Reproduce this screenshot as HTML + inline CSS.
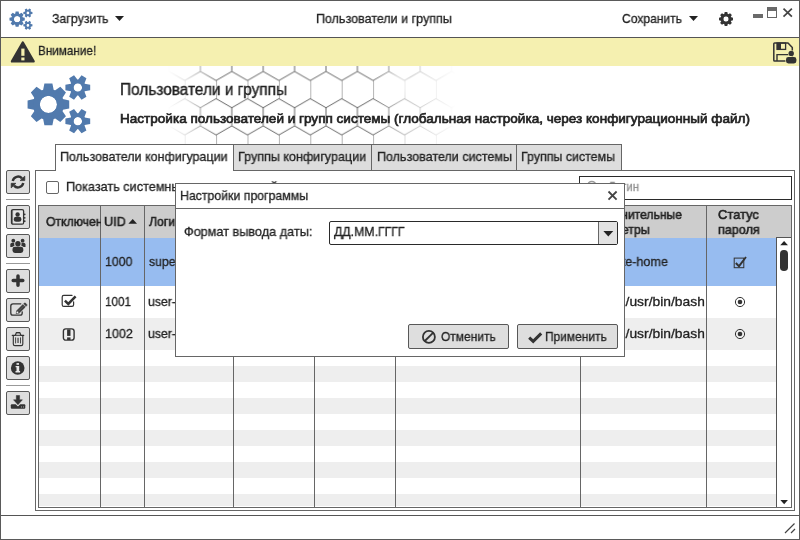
<!DOCTYPE html>
<html>
<head>
<meta charset="utf-8">
<style>
html,body{margin:0;padding:0;}
body{width:800px;height:540px;overflow:hidden;background:#fff;font-family:"Liberation Sans",sans-serif;font-size:13px;color:#222;position:relative;}
.abs{position:absolute;}
.t{position:absolute;white-space:nowrap;line-height:20px;color:#222;font-size:13px;transform-origin:0 0;will-change:transform;}
svg{position:absolute;overflow:visible;}
#win{position:absolute;left:0;top:0;width:798px;height:538px;border:1px solid #5a5a5a;background:#fff;}
#titleline{left:1px;top:37px;width:798px;height:1px;background:#555;}
#alert{left:1px;top:38px;width:798px;height:28px;background:#f5f0b0;}
#status{left:1px;top:515px;width:798px;height:1px;background:#555;}
.tab{position:absolute;top:144px;height:27px;border:1px solid #666;background:#ddd;box-sizing:border-box;}
.tab.sel{background:#fff;border-bottom:none;height:27px;z-index:3;}
#panel{left:35px;top:170px;width:760px;height:341px;border:1px solid #666;box-sizing:border-box;background:#fff;}
.tb{position:absolute;left:6px;width:24px;height:24px;box-sizing:border-box;border:1px solid #585858;background:#dedede;border-radius:2px;}
.sep{position:absolute;left:6px;width:24px;height:1px;background:#999;}
#table{left:38px;top:205px;width:754px;height:303px;border:1px solid #666;box-sizing:border-box;background:#fff;}
.col{position:absolute;top:206px;width:1px;height:301px;background:#666;}
.stripe{position:absolute;left:39px;width:737px;background:#eee;}
#dialog{left:175px;top:183px;width:450px;height:174px;border:1px solid #666;box-sizing:border-box;background:#fff;z-index:10;}
.btn{position:absolute;height:25px;box-sizing:border-box;border:1px solid #585858;background:#dedede;border-radius:2px;}
.z11{z-index:11;}
</style>
</head>
<body>
<div id="win"></div>
<div id="titleline" class="abs"></div>
<div id="alert" class="abs"></div>

<!-- title bar -->
<svg style="left:9px;top:8px;" width="24" height="22" viewBox="0 0 64 60"><path d="M35.86 25.10 L42.22 26.40 L42.22 34.40 L35.86 35.70 L35.37 36.88 L38.95 42.29 L33.29 47.95 L27.88 44.37 L26.70 44.86 L25.40 51.22 L17.40 51.22 L16.10 44.86 L14.92 44.37 L9.51 47.95 L3.85 42.29 L7.43 36.88 L6.94 35.70 L0.58 34.40 L0.58 26.40 L6.94 25.10 L7.43 23.92 L3.85 18.51 L9.51 12.85 L14.92 16.43 L16.10 15.94 L17.40 9.58 L25.40 9.58 L26.70 15.94 L27.88 16.43 L33.29 12.85 L38.95 18.51 L35.37 23.92Z M12.80 30.40 a8.60 8.60 0 1 0 17.20 0 a8.60 8.60 0 1 0 -17.20 0Z" fill="#517aad" fill-rule="evenodd"/><path d="M57.67 9.80 L63.19 10.70 L63.19 16.30 L57.67 17.20 L57.44 17.60 L59.42 22.83 L54.57 25.63 L51.03 21.30 L50.57 21.30 L47.03 25.63 L42.18 22.83 L44.16 17.60 L43.93 17.20 L38.41 16.30 L38.41 10.70 L43.93 9.80 L44.16 9.40 L42.18 4.17 L47.03 1.37 L50.57 5.70 L51.03 5.70 L54.57 1.37 L59.42 4.17 L57.44 9.40Z M46.50 13.50 a4.30 4.30 0 1 0 8.60 0 a4.30 4.30 0 1 0 -8.60 0Z" fill="#517aad" fill-rule="evenodd"/><path d="M57.67 43.50 L63.19 44.40 L63.19 50.00 L57.67 50.90 L57.44 51.30 L59.42 56.53 L54.57 59.33 L51.03 55.00 L50.57 55.00 L47.03 59.33 L42.18 56.53 L44.16 51.30 L43.93 50.90 L38.41 50.00 L38.41 44.40 L43.93 43.50 L44.16 43.10 L42.18 37.87 L47.03 35.07 L50.57 39.40 L51.03 39.40 L54.57 35.07 L59.42 37.87 L57.44 43.10Z M46.50 47.20 a4.30 4.30 0 1 0 8.60 0 a4.30 4.30 0 1 0 -8.60 0Z" fill="#517aad" fill-rule="evenodd"/><circle cx="21.4" cy="30.4" r="12" fill="none" stroke="#517aad" stroke-width="6.8"/><circle cx="50.8" cy="13.5" r="6.05" fill="none" stroke="#517aad" stroke-width="3.5"/><circle cx="50.8" cy="47.2" r="6.05" fill="none" stroke="#517aad" stroke-width="3.5"/></svg>
<div class="t" style="left:51.75px;top:8.70px;font-size:13px;transform:scaleX(0.9524);-webkit-text-stroke:0.3px #222;">Загрузить</div>
<svg style="left:115px;top:16px;" width="9" height="5" viewBox="0 0 9 5"><path d="M0 0H9L4.5 5Z" fill="#222"/></svg>
<div class="t" style="left:315.79px;top:8.80px;font-size:13px;transform:scaleX(0.9625);-webkit-text-stroke:0.3px #222;">Пользователи и группы</div>
<div class="t" style="left:621.75px;top:8.70px;font-size:13px;transform:scaleX(0.9294);-webkit-text-stroke:0.3px #222;">Сохранить</div>
<svg style="left:689px;top:16px;" width="9" height="5" viewBox="0 0 9 5"><path d="M0 0H9L4.5 5Z" fill="#222"/></svg>

<svg style="left:719px;top:12px;" width="14" height="14" viewBox="0 0 14 14"><path d="M11.62 5.10 L13.98 5.70 L13.98 8.30 L11.62 8.90 L11.61 8.93 L12.85 11.02 L11.02 12.85 L8.93 11.61 L8.90 11.62 L8.30 13.98 L5.70 13.98 L5.10 11.62 L5.07 11.61 L2.98 12.85 L1.15 11.02 L2.39 8.93 L2.38 8.90 L0.02 8.30 L0.02 5.70 L2.38 5.10 L2.39 5.07 L1.15 2.98 L2.98 1.15 L5.07 2.39 L5.10 2.38 L5.70 0.02 L8.30 0.02 L8.90 2.38 L8.93 2.39 L11.02 1.15 L12.85 2.98 L11.61 5.07Z M4.30 7.00 a2.70 2.70 0 1 0 5.40 0 a2.70 2.70 0 1 0 -5.40 0Z" fill="#333" fill-rule="evenodd"/><circle cx="7" cy="7" r="3.95" fill="none" stroke="#333" stroke-width="2.5"/></svg><div class="abs" style="left:753px;top:14px;width:10px;height:4px;background:#6a6a6a;"></div><div class="abs" style="left:767px;top:7px;width:10px;height:11px;box-sizing:border-box;border:1px solid #666;border-top:4px solid #6a6a6a;background:#fff;"></div><svg style="left:783px;top:8px;" width="10" height="10" viewBox="0 0 10 10"><path d="M0.5 0.7L8.9 8.7M8.9 0.7L0.5 8.7" stroke="#444" stroke-width="1.7" fill="none"/></svg>

<!-- alert -->
<div class="t" style="left:38.40px;top:41.10px;font-size:13px;transform:scaleX(0.9007);-webkit-text-stroke:0.3px #222;">Внимание!</div>

<svg style="left:10px;top:40.5px;" width="26" height="23" viewBox="0 0 26 23"><path d="M12.8 1.6L23.6 20.4H2Z" fill="#333" stroke="#333" stroke-width="2.4" stroke-linejoin="round"/><rect x="11.3" y="7.6" width="3.2" height="7.2" fill="#f5f0b0"/><rect x="11.3" y="16.5" width="3.2" height="2.9" fill="#f5f0b0"/></svg>
<svg style="left:770px;top:40px;" width="28" height="25" viewBox="0 0 28 25"><path d="M4.6 3H18L22.3 7.6V19.4Q22.3 21 20.7 21H4.6Q3.8 21 3.8 20.2V3.8Q3.8 3 4.6 3Z" fill="none" stroke="#333" stroke-width="1.5" stroke-linejoin="round"/><rect x="7" y="3" width="8.6" height="6.4" fill="none" stroke="#333" stroke-width="1.3"/><rect x="7" y="3" width="4" height="6.4" fill="#333"/><path d="M7 21V14.6H20" fill="none" stroke="#333" stroke-width="1.4"/><circle cx="21.2" cy="13.4" r="3.2" fill="#f5f0b0"/><rect x="15.4" y="16.5" width="11.6" height="7.6" rx="3" fill="#f5f0b0"/><circle cx="21.2" cy="13.4" r="2.7" fill="#333"/><rect x="16" y="17.1" width="10.4" height="6.4" rx="2.4" fill="#333"/></svg>

<!-- heading -->
<svg style="left:165px;top:66px;" width="300" height="78" viewBox="165 66 300 78">
<defs>
<pattern id="hx" patternUnits="userSpaceOnUse" x="216.1" y="71.45" width="31.4" height="54.45"><path d="M0 9.07L15.70 0L31.40 9.07M0 9.07V27.22M0 27.22L15.70 36.30L31.40 27.22M15.70 36.30V54.45" fill="none" stroke="#000" stroke-width="0.6"/></pattern>
<linearGradient id="hg" x1="165" x2="465" y1="0" y2="0" gradientUnits="userSpaceOnUse"><stop offset="0.010" stop-color="#fff" stop-opacity="0"/><stop offset="0.070" stop-color="#fff" stop-opacity="0.25"/><stop offset="0.117" stop-color="#fff" stop-opacity="0.6"/><stop offset="0.170" stop-color="#fff" stop-opacity="1"/><stop offset="0.690" stop-color="#fff" stop-opacity="1"/><stop offset="0.777" stop-color="#fff" stop-opacity="0.55"/><stop offset="0.877" stop-color="#fff" stop-opacity="0.25"/><stop offset="0.970" stop-color="#fff" stop-opacity="0"/></linearGradient>
<radialGradient id="hb"><stop offset="0" stop-color="#fff" stop-opacity="0.9"/><stop offset="1" stop-color="#fff" stop-opacity="0"/></radialGradient>
<mask id="hm" maskUnits="userSpaceOnUse" x="165" y="66" width="300" height="78"><rect x="165" y="66" width="300" height="78" fill="url(#hg)"/></mask>
</defs>
<rect x="165" y="66" width="300" height="78" fill="url(#hx)" mask="url(#hm)"/>
<ellipse cx="396" cy="86" rx="20" ry="16" fill="url(#hb)"/>
</svg>
<svg style="left:27px;top:74px;" width="64" height="60" viewBox="0 0 64 60"><path d="M35.86 25.10 L42.22 26.40 L42.22 34.40 L35.86 35.70 L35.37 36.88 L38.95 42.29 L33.29 47.95 L27.88 44.37 L26.70 44.86 L25.40 51.22 L17.40 51.22 L16.10 44.86 L14.92 44.37 L9.51 47.95 L3.85 42.29 L7.43 36.88 L6.94 35.70 L0.58 34.40 L0.58 26.40 L6.94 25.10 L7.43 23.92 L3.85 18.51 L9.51 12.85 L14.92 16.43 L16.10 15.94 L17.40 9.58 L25.40 9.58 L26.70 15.94 L27.88 16.43 L33.29 12.85 L38.95 18.51 L35.37 23.92Z M12.80 30.40 a8.60 8.60 0 1 0 17.20 0 a8.60 8.60 0 1 0 -17.20 0Z" fill="#517aad" fill-rule="evenodd"/><path d="M57.67 9.80 L63.19 10.70 L63.19 16.30 L57.67 17.20 L57.44 17.60 L59.42 22.83 L54.57 25.63 L51.03 21.30 L50.57 21.30 L47.03 25.63 L42.18 22.83 L44.16 17.60 L43.93 17.20 L38.41 16.30 L38.41 10.70 L43.93 9.80 L44.16 9.40 L42.18 4.17 L47.03 1.37 L50.57 5.70 L51.03 5.70 L54.57 1.37 L59.42 4.17 L57.44 9.40Z M46.50 13.50 a4.30 4.30 0 1 0 8.60 0 a4.30 4.30 0 1 0 -8.60 0Z" fill="#517aad" fill-rule="evenodd"/><path d="M57.67 43.50 L63.19 44.40 L63.19 50.00 L57.67 50.90 L57.44 51.30 L59.42 56.53 L54.57 59.33 L51.03 55.00 L50.57 55.00 L47.03 59.33 L42.18 56.53 L44.16 51.30 L43.93 50.90 L38.41 50.00 L38.41 44.40 L43.93 43.50 L44.16 43.10 L42.18 37.87 L47.03 35.07 L50.57 39.40 L51.03 39.40 L54.57 35.07 L59.42 37.87 L57.44 43.10Z M46.50 47.20 a4.30 4.30 0 1 0 8.60 0 a4.30 4.30 0 1 0 -8.60 0Z" fill="#517aad" fill-rule="evenodd"/><circle cx="21.4" cy="30.4" r="12" fill="none" stroke="#517aad" stroke-width="6.8"/><circle cx="50.8" cy="13.5" r="6.05" fill="none" stroke="#517aad" stroke-width="3.5"/><circle cx="50.8" cy="47.2" r="6.05" fill="none" stroke="#517aad" stroke-width="3.5"/></svg>
<div class="t" style="left:120.44px;top:80.46px;font-size:16px;transform:scaleX(0.9620);-webkit-text-stroke:0.4px #222;">Пользователи и группы</div>
<div class="t" style="left:120.36px;top:108.50px;font-size:13px;transform:scaleX(1.0417);-webkit-text-stroke:0.65px #222;">Настройка пользователей и групп системы (глобальная настройка, через конфигурационный файл)</div>

<!-- tabs -->
<div class="tab sel" style="left:55px;width:179px;"></div>
<div class="tab" style="left:233px;width:139px;"></div>
<div class="tab" style="left:371px;width:146px;"></div>
<div class="tab" style="left:516px;width:106px;"></div>
<div id="panel" class="abs"></div>
<div class="t" style="left:60.29px;top:146.90px;font-size:13px;transform:scaleX(0.9614);z-index:4;-webkit-text-stroke:0.3px #222;">Пользователи конфигурации</div>
<div class="t" style="left:237.93px;top:146.90px;font-size:13px;transform:scaleX(0.9658);-webkit-text-stroke:0.3px #222;">Группы конфигурации</div>
<div class="t" style="left:376.54px;top:146.90px;font-size:13px;transform:scaleX(0.9640);-webkit-text-stroke:0.3px #222;">Пользователи системы</div>
<div class="t" style="left:520.95px;top:146.90px;font-size:13px;transform:scaleX(0.9540);-webkit-text-stroke:0.3px #222;">Группы системы</div>

<!-- left toolbar -->
<div class="tb" style="top:170px;"></div>
<div class="sep" style="top:199px;"></div>
<div class="tb" style="top:205px;"></div>
<div class="tb" style="top:234px;"></div>
<div class="sep" style="top:263px;"></div>
<div class="tb" style="top:269px;"></div>
<div class="tb" style="top:298px;"></div>
<div class="tb" style="top:327px;"></div>
<div class="tb" style="top:356px;"></div>
<div class="sep" style="top:385px;"></div>
<div class="tb" style="top:391px;"></div>

<!-- toolbar icons -->
<svg style="left:6px;top:170px;" width="24" height="24" viewBox="0 0 24 24"><path d="M6.72 10.88A5.4 5.4 0 0 1 16.01 8.39" stroke="#333" stroke-width="2.4" fill="none"/><path d="M17.28 13.12A5.4 5.4 0 0 1 7.99 15.61" stroke="#333" stroke-width="2.4" fill="none"/><path d="M18.8 6.1V10.6H14.1Z" fill="#333" stroke="#333" stroke-width="0.7" stroke-linejoin="round"/><path d="M5.2 17.9V13.3H9.9Z" fill="#333" stroke="#333" stroke-width="0.7" stroke-linejoin="round"/></svg><svg style="left:6px;top:205px;" width="24" height="24" viewBox="0 0 24 24"><rect x="5.5" y="4.6" width="12.1" height="14.6" rx="1.5" fill="#e6e6e6" stroke="#333" stroke-width="1.3"/><path d="M6.6 5V19" stroke="#333" stroke-width="0.6"/><rect x="18" y="8.4" width="1.5" height="1.8" rx="0.6" fill="#333"/><rect x="18" y="11.9" width="1.5" height="1.8" rx="0.6" fill="#333"/><rect x="18" y="15.3" width="1.5" height="1.8" rx="0.6" fill="#333"/><circle cx="11.6" cy="9.5" r="2.2" fill="#333"/><rect x="7.8" y="11.8" width="7.6" height="5" rx="2.3" fill="#333"/></svg><svg style="left:6px;top:234px;" width="24" height="24" viewBox="0 0 24 24"><circle cx="7.3" cy="6.7" r="1.9" fill="#333"/><circle cx="16.6" cy="6.7" r="1.9" fill="#333"/><path d="M4.3 12.9V10.6Q4.3 8.8 6.2 8.8H8.4V12.9Z" fill="#333"/><path d="M19.5 12.9V10.6Q19.5 8.8 17.6 8.8H15.4V12.9Z" fill="#333"/><circle cx="11.9" cy="9.7" r="3.3" fill="#dedede"/><rect x="5.8" y="12" width="12.2" height="7.6" rx="2.8" fill="#dedede"/><circle cx="11.9" cy="9.7" r="2.7" fill="#333"/><rect x="6.5" y="12.7" width="10.8" height="6.2" rx="2.4" fill="#333"/></svg><svg style="left:6px;top:269px;" width="24" height="24" viewBox="0 0 24 24"><path d="M12 6.9V16.2M7.2 11.5H16.8" stroke="#333" stroke-width="3.5" stroke-linecap="round" fill="none"/></svg><svg style="left:6px;top:298px;" width="24" height="24" viewBox="0 0 24 24"><path d="M14.8 5.8H7Q4.8 5.8 4.8 8V15Q4.8 17.2 7 17.2H14Q16.2 17.2 16.2 15V13.8" stroke="#333" stroke-width="1.3" fill="none" stroke-linecap="round"/><path d="M10.2 15.5L10.8 12.7L16.9 6.6L19.3 9L13.2 15.1Z" fill="#3a3a3a" stroke="#3a3a3a" stroke-width="0.7" stroke-linejoin="round"/><path d="M17.7 5.8L18.4 5.1Q19 4.6 19.6 5.2L20.8 6.4Q21.3 7 20.8 7.6L20.1 8.3Z" fill="#3a3a3a" stroke="#3a3a3a" stroke-width="0.5" stroke-linejoin="round"/><path d="M12 13.7L17.8 7.9" stroke="#888" stroke-width="0.45"/><circle cx="11.4" cy="14.4" r="0.95" fill="#f0f0f0"/></svg><svg style="left:6px;top:327px;" width="24" height="24" viewBox="0 0 24 24"><path d="M6.3 8.4H17.7" stroke="#333" stroke-width="1.2" stroke-linecap="round"/><path d="M9.4 8.2L10.3 5.6H13.9L14.8 8.2" stroke="#333" stroke-width="1.2" fill="#bbb" stroke-linejoin="round"/><path d="M7.3 8.6V17Q7.3 18.6 8.9 18.6H15.2Q16.8 18.6 16.8 17V8.6" stroke="#333" stroke-width="1.15" fill="none"/><path d="M9.6 10.8V16M14.5 10.8V16" stroke="#333" stroke-width="0.9" stroke-linecap="round"/><path d="M12.05 10.8V16" stroke="#666" stroke-width="1.6"/></svg><svg style="left:6px;top:356px;" width="24" height="24" viewBox="0 0 24 24"><circle cx="11.7" cy="12" r="6.8" fill="#333"/><rect x="10.5" y="7.1" width="2.5" height="1.7" fill="#e8e8e8"/><path d="M9.6 10V11.2H10.5V15.1H9.5V16.5H14.1V15.1H13.2V10Z" fill="#e8e8e8"/></svg><svg style="left:6px;top:391px;" width="24" height="24" viewBox="0 0 24 24"><rect x="4.8" y="13.2" width="14.5" height="4.5" rx="1" fill="#333"/><path d="M6.9 8.8H17L11.95 14.4Z" fill="#dedede" stroke="#dedede" stroke-width="1.6" stroke-linejoin="round"/><path d="M10.3 4.5H13.6V8.8H16.4L11.95 13.7L7.5 8.8H10.3Z" fill="#333" stroke="#333" stroke-width="0.5" stroke-linejoin="round"/><rect x="15.3" y="15.2" width="0.6" height="1.5" fill="#bbb"/><rect x="17.2" y="15.2" width="0.6" height="1.5" fill="#bbb"/></svg>

<!-- checkbox + search -->
<div class="abs" style="left:46px;top:181px;width:13px;height:13px;box-sizing:border-box;border:1px solid #666;border-radius:2px;background:#fff;"></div>
<div class="t" style="left:65.53px;top:177.20px;font-size:13px;transform:scaleX(0.9734);-webkit-text-stroke:0.3px #222;clip-path:inset(4.9px 0 0 0);">Показать системных пользователей</div>
<div class="abs" style="left:579px;top:176px;width:213px;height:24px;box-sizing:border-box;border:1px solid #2a2a2a;background:#fff;"></div>
<svg style="left:586px;top:180px;" width="14" height="14" viewBox="0 0 14 14"><circle cx="5.8" cy="5.5" r="4" fill="none" stroke="#999" stroke-width="1.6"/><path d="M8.8 8.6L12.4 12.2" stroke="#999" stroke-width="2" stroke-linecap="round"/></svg>
<div class="t" style="left:608.00px;top:177.20px;font-size:13px;transform:scaleX(0.8917);color:#909090;-webkit-text-stroke:0.3px #909090;">Логин</div>

<!-- table -->
<div id="table" class="abs"></div>
<div class="abs" style="left:39px;top:206px;width:752px;height:32px;background:#cdcdcd;"></div>
<div class="abs" style="left:39px;top:238px;width:737px;height:48px;background:#97bcf0;"></div>
<div class="stripe" style="top:318px;height:32px;"></div>
<div class="stripe" style="top:366px;height:16px;"></div>
<div class="stripe" style="top:398px;height:16px;"></div>
<div class="stripe" style="top:430px;height:16px;"></div>
<div class="stripe" style="top:462px;height:16px;"></div>
<div class="stripe" style="top:494px;height:12px;"></div>
<div class="col" style="left:100px;"></div>
<div class="col" style="left:144px;"></div>
<div class="col" style="left:233px;"></div>
<div class="col" style="left:314px;"></div>
<div class="col" style="left:395px;"></div>
<div class="col" style="left:580px;"></div>
<div class="col" style="left:706px;"></div>
<!-- scrollbar -->
<div class="abs" style="left:776px;top:237px;width:15px;height:270px;box-sizing:border-box;border-left:1px solid #555;border-top:1px solid #555;background:#fff;"></div>
<svg style="left:780px;top:240.7px;" width="8.2" height="4.3" viewBox="0 0 9 5"><path d="M0 5H9L4.5 0Z" fill="#222"/></svg>
<svg style="left:780px;top:500.1px;" width="8.3" height="4.2" viewBox="0 0 9 5"><path d="M0 0H9L4.5 5Z" fill="#222"/></svg>
<div class="abs" style="left:780.3px;top:250px;width:7.6px;height:20.8px;border-radius:3.8px;background:#333;"></div>

<!-- table header text -->
<div class="t" style="left:45.75px;top:212.30px;font-size:13px;transform:scaleX(0.9400);-webkit-text-stroke:0.55px #222;width:57.71px;overflow:hidden;">Отключен</div>
<div class="t" style="left:103.63px;top:212.30px;font-size:13px;transform:scaleX(0.9714);-webkit-text-stroke:0.55px #222;">UID</div>
<svg style="left:128px;top:218.8px;" width="9.4" height="4.8" viewBox="0 0 9 5"><path d="M0 5H9L4.5 0Z" fill="#222"/></svg>
<div class="t" style="left:148.50px;top:212.30px;font-size:13px;transform:scaleX(0.9400);-webkit-text-stroke:0.55px #222;">Логин</div>
<div class="t" style="left:586.00px;top:204.70px;font-size:13px;transform:scaleX(0.9320);-webkit-text-stroke:0.55px #222;">Дополнительные</div>
<div class="t" style="left:586.00px;top:219.90px;font-size:13px;transform:scaleX(0.9497);-webkit-text-stroke:0.55px #222;">параметры</div>
<div class="t" style="left:717.70px;top:204.70px;font-size:13px;transform:scaleX(0.9929);-webkit-text-stroke:0.55px #222;">Статус</div>
<div class="t" style="left:717.70px;top:219.90px;font-size:13px;transform:scaleX(0.9668);-webkit-text-stroke:0.55px #222;">пароля</div>

<!-- rows text -->
<div class="t" style="left:104.70px;top:252.10px;font-size:13px;transform:scaleX(0.9446);-webkit-text-stroke:0.3px #222;">1000</div>
<div class="t" style="left:148.50px;top:252.10px;font-size:13px;transform:scaleX(0.9400);-webkit-text-stroke:0.3px #222;">superuser</div>
<div class="t" style="left:588.50px;top:252.10px;font-size:13px;transform:scaleX(0.9667);-webkit-text-stroke:0.3px #222;">--create-home</div>
<div class="t" style="left:104.60px;top:292.20px;font-size:13px;transform:scaleX(0.8958);-webkit-text-stroke:0.3px #222;">1001</div>
<div class="t" style="left:148.40px;top:292.20px;font-size:13px;transform:scaleX(0.9400);-webkit-text-stroke:0.3px #222;">user-1</div>
<div class="t" style="left:584.20px;top:292.20px;font-size:13px;transform:scaleX(1.0653);-webkit-text-stroke:0.3px #222;width:112.93px;overflow:hidden;">--shell /usr/bin/bash</div>
<div class="t" style="left:104.60px;top:324.10px;font-size:13px;transform:scaleX(0.9620);-webkit-text-stroke:0.3px #222;">1002</div>
<div class="t" style="left:148.40px;top:324.10px;font-size:13px;transform:scaleX(0.9400);-webkit-text-stroke:0.3px #222;">user-2</div>
<div class="t" style="left:584.20px;top:324.10px;font-size:13px;transform:scaleX(1.0653);-webkit-text-stroke:0.3px #222;width:112.93px;overflow:hidden;">--shell /usr/bin/bash</div>

<svg style="left:61px;top:294px;" width="16" height="14" viewBox="0 0 16 14"><path d="M12.6 7.8V10.8Q12.6 12.4 11 12.4H2.8Q1.2 12.4 1.2 10.8V3Q1.2 1.4 2.8 1.4H11" fill="none" stroke="#333" stroke-width="1.2" stroke-linecap="round"/><path d="M3.9 6.7L7.3 9.9L14.6 2.4" fill="none" stroke="#333" stroke-width="2.5" stroke-linejoin="miter"/></svg><svg style="left:62px;top:327px;" width="14" height="15" viewBox="0 0 14 15"><rect x="1.4" y="1.9" width="10.7" height="11.2" rx="2.4" fill="none" stroke="#333" stroke-width="1.4"/><rect x="5.1" y="2.4" width="3.4" height="6.5" fill="#333"/><rect x="5.1" y="10.4" width="3.4" height="2.6" fill="#333"/></svg><svg style="left:733px;top:255px;" width="16" height="14" viewBox="0 0 16 14"><rect x="1.2" y="3.1" width="9.6" height="9.6" fill="none" stroke="#333" stroke-width="1"/><path d="M2.8 8L6 11.2L13 2" fill="none" stroke="#333" stroke-width="1.9"/></svg><svg style="left:734px;top:296px;" width="12" height="12" viewBox="0 0 12 12"><circle cx="6" cy="6" r="4.6" fill="none" stroke="#333" stroke-width="1"/><circle cx="6" cy="6" r="2.3" fill="#333"/></svg><svg style="left:734px;top:328.2px;" width="12" height="12" viewBox="0 0 12 12"><circle cx="6" cy="6" r="4.6" fill="none" stroke="#333" stroke-width="1"/><circle cx="6" cy="6" r="2.3" fill="#333"/></svg>

<!-- dialog -->
<div id="dialog" class="abs"></div>
<div class="abs z11" style="left:176px;top:208px;width:448px;height:1px;background:#666;"></div>
<div class="t" style="left:180.05px;top:185.50px;font-size:13px;transform:scaleX(0.9468);z-index:11;-webkit-text-stroke:0.3px #222;">Настройки программы</div>
<svg class="z11" style="left:608px;top:191px;" width="9" height="9" viewBox="0 0 9 9"><path d="M0.5 0.5L8.6 8.6M8.6 0.5L0.5 8.6" stroke="#444" stroke-width="1.8" fill="none"/></svg>
<div class="t" style="left:184.00px;top:221.80px;font-size:13px;transform:scaleX(0.9748);z-index:11;-webkit-text-stroke:0.3px #222;">Формат вывода даты:</div>
<div class="abs z11" style="left:329px;top:221px;width:289px;height:24px;box-sizing:border-box;border:1px solid #2a2a2a;background:#fff;border-radius:2px;"></div>
<div class="abs z11" style="left:598px;top:222px;width:19px;height:22px;box-sizing:border-box;border-left:1px solid #666;background:#e2e2e2;"></div>
<svg class="z11" style="left:603px;top:230.8px;" width="10.6" height="5.5" viewBox="0 0 9 5"><path d="M0 0H9L4.5 5Z" fill="#222"/></svg>
<div class="t" style="left:333.80px;top:221.80px;font-size:13px;transform:scaleX(0.9463);z-index:11;-webkit-text-stroke:0.3px #222;">ДД.ММ.ГГГГ</div>
<div class="btn z11" style="left:408px;top:324px;width:101px;"></div>
<div class="btn z11" style="left:517px;top:324px;width:101px;"></div>
<svg class="z11" style="left:421px;top:329px;" width="16" height="16" viewBox="0 0 16 16"><circle cx="7.9" cy="7.9" r="6" fill="none" stroke="#333" stroke-width="1.8"/><path d="M3.8 12L12 3.8" stroke="#333" stroke-width="1.8"/></svg><svg class="z11" style="left:527px;top:331px;" width="17" height="13" viewBox="0 0 17 13"><path d="M2.2 6.6L6.2 10.4L14.2 2.4" fill="none" stroke="#333" stroke-width="3"/></svg>
<div class="t" style="left:440.50px;top:326.50px;font-size:13px;transform:scaleX(0.9207);z-index:11;-webkit-text-stroke:0.3px #222;">Отменить</div>
<div class="t" style="left:545.08px;top:326.50px;font-size:13px;transform:scaleX(0.9187);z-index:11;-webkit-text-stroke:0.3px #222;">Применить</div>

<div id="status" class="abs"></div>
<svg style="left:780px;top:520px;" width="18" height="16" viewBox="780 520 18 16"><path d="M785 533L794.5 523.5M791 533L795 529" stroke="#444" stroke-width="1.2" fill="none"/></svg>
</body>
</html>
